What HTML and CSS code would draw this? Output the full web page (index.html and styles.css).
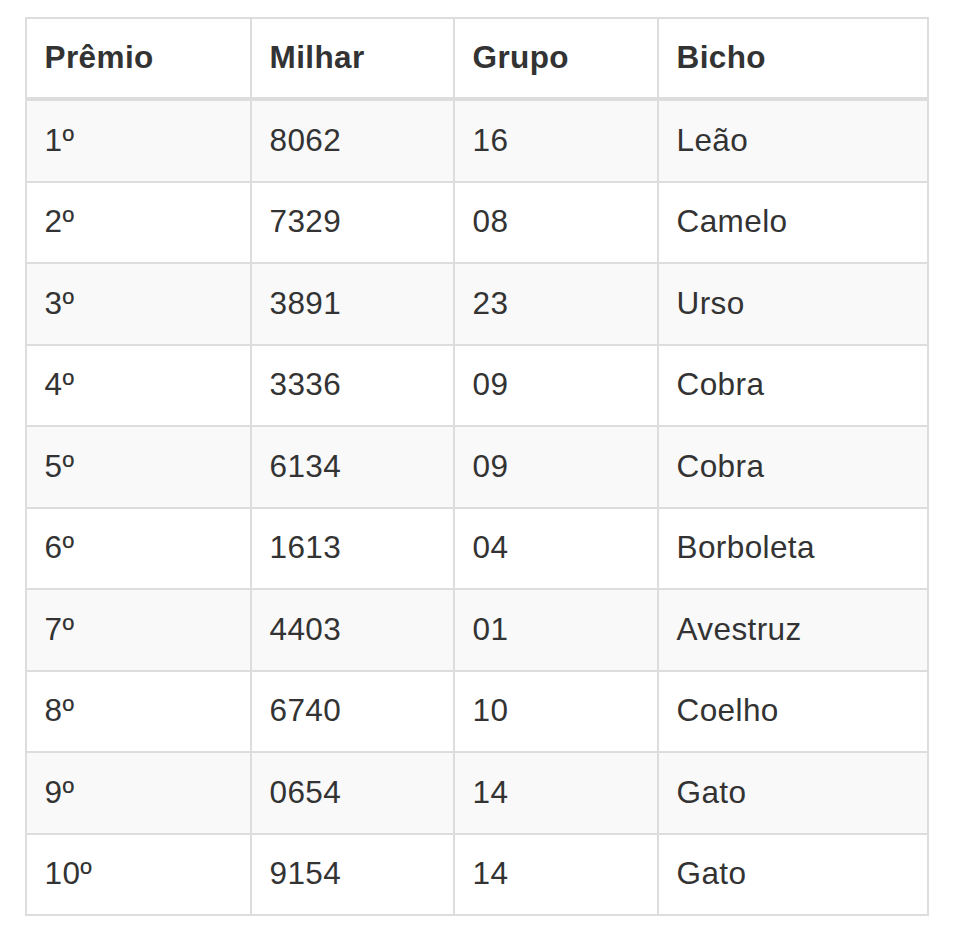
FILE: index.html
```html
<!DOCTYPE html>
<html lang="pt">
<head>
<meta charset="utf-8">
<link rel="stylesheet" href="styles.css">
</head>
<body>
<table class="results">
<colgroup>
<col class="c1"><col class="c2"><col class="c3"><col class="c4">
</colgroup>
<thead>
<tr><th>Prêmio</th><th>Milhar</th><th>Grupo</th><th>Bicho</th></tr>
</thead>
<tbody>
<tr><td>1º</td><td>8062</td><td>16</td><td>Leão</td></tr>
<tr><td>2º</td><td>7329</td><td>08</td><td>Camelo</td></tr>
<tr><td>3º</td><td>3891</td><td>23</td><td>Urso</td></tr>
<tr><td>4º</td><td>3336</td><td>09</td><td>Cobra</td></tr>
<tr><td>5º</td><td>6134</td><td>09</td><td>Cobra</td></tr>
<tr><td>6º</td><td>1613</td><td>04</td><td>Borboleta</td></tr>
<tr><td>7º</td><td>4403</td><td>01</td><td>Avestruz</td></tr>
<tr><td>8º</td><td>6740</td><td>10</td><td>Coelho</td></tr>
<tr><td>9º</td><td>0654</td><td>14</td><td>Gato</td></tr>
<tr><td>10º</td><td>9154</td><td>14</td><td>Gato</td></tr>
</tbody>
</table>
</body>
</html>
```
FILE: styles.css
```css
html, body {
  margin: 0;
  padding: 0;
  background: #fff;
}
body {
  font-family: "Liberation Sans", Arial, sans-serif;
  color: #333;
}
.results {
  margin: 17px 0 0 25px;
  width: 902px;
  border-collapse: collapse;
  table-layout: fixed;
  font-size: 31.5px;
  letter-spacing: 0.4px;
  line-height: 44px;
}
.c1 { width: 225px; }
.c2 { width: 203px; }
.c3 { width: 204px; }
.c4 { width: 270px; }
.results th,
.results td {
  border: 2px solid #ddd;
  padding: 16.5px 17px 19px 17.5px;
  text-align: left;
  vertical-align: top;
}
.results th {
  font-weight: bold;
  padding-top: 16px;
  padding-bottom: 18px;
  border-bottom-width: 4px;
}
.results tbody tr:nth-child(odd) {
  background: #f9f9f9;
}
```
